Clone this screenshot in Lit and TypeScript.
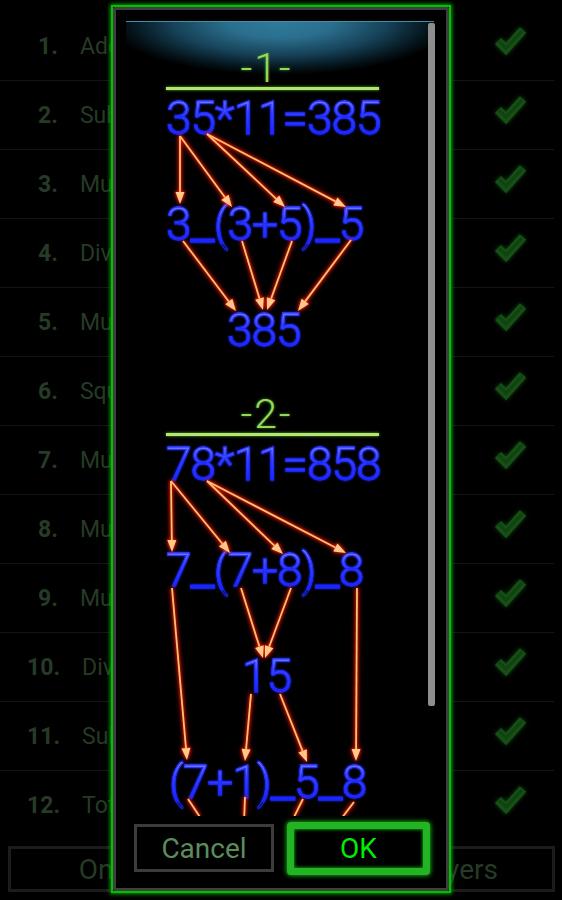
import { LitElement, html, css, svg } from "lit";
import { customElement } from "lit/decorators.js";
import { classMap } from "lit/directives/class-map.js";

const NAMES = ["Addition","Subtraction","Multiplication","Division","Multiplication","Square","Multiplication","Multiplication","Multiplication","Division","Subtraction","Total"];

type Line = { text: string; cls: string };
const SECTIONS: { title: string; lines: Line[] }[] = [
  { title: "-1-", lines: [
    { text: "35*11=385", cls: "l0" },
    { text: "3_(3+5)_5", cls: "l1" },
    { text: "385", cls: "l2" },
  ]},
  { title: "-2-", lines: [
    { text: "78*11=858", cls: "l0" },
    { text: "7_(7+8)_8", cls: "l1" },
    { text: "15", cls: "l3" },
    { text: "(7+1)_5_8", cls: "l4" },
  ]},
];

const ARROWS: number[][] = [
  [180,137,180,205],[180,137,232,208],[207,135,285,208],[207,135,346,208],
  [183,242,236,312],[242,242,263,311],[292,242,267,311],[351,241,298,312],
  [171,482,172,553],[171,482,230,554],[207,482,283,555],[207,482,346,554],
  [172,589,187,761],[241,589,263,659],[291,589,265,659],[357,589,356,762],
  [251,695,245,762],[280,695,307,763],
];
const STUBS: number[][] = [[188,800,204,824],[245,798,244,824],[303,800,291,824],[354,803,338,824]];

function arrow(a: number[]) {
  const [x1, y1, x2, y2] = a;
  const d = Math.hypot(x2 - x1, y2 - y1);
  const ux = (x2 - x1) / d, uy = (y2 - y1) / d;
  const L = 12, W = 4.5;
  const bx = x2 - ux * L, by = y2 - uy * L;
  const pts = `${x2},${y2} ${bx - uy * W},${by + ux * W} ${bx + uy * W},${by - ux * W}`;
  return svg`<line x1=${x1} y1=${y1} x2=${bx} y2=${by} class="ln"></line><polygon points=${pts} class="hd"></polygon>`;
}
function stub(a: number[]) {
  return svg`<line x1=${a[0]} y1=${a[1]} x2=${a[2]} y2=${a[3]} class="ln"></line>`;
}
function formula(text: string) {
  return text.split(/(_)/).map(p => p === "_" ? html`<span class="u">_</span>` : p);
}

@customElement("app-root")
export class AppRoot extends LitElement {
  static styles = css`
    :host { display: block; width: 562px; height: 900px; background: #000; position: relative; overflow: hidden; font-family: Roboto, "Noto Sans", sans-serif; }
    .page { display: flex; flex-direction: column; padding-top: 12px; height: 900px; box-sizing: border-box; }
    .row { height: 68px; border-bottom: 1px solid #141414; margin: 0 8px 0 0; display: flex; align-items: center; box-sizing: content-box; flex: none; }
    .row.last { border-bottom-color: transparent; }
    .num { font-size: 23px; font-weight: 700; color: #263a26; margin-left: 38px; margin-right: 22px; }
    .num.wide { margin-left: 27px; }
    .name { font-size: 23px; color: #263a26; flex: 1; }
    .check { width: 36px; height: 36px; margin: 0 26px 14px 0; filter: blur(0.7px) drop-shadow(0 0 2px #0e4a0e); }
    .modes { display: flex; margin: 6px 7px 0 8px; height: 46px; }
    .mode { flex: 1; border: 3px solid #1c1c1c; box-sizing: border-box; display: flex; align-items: center; justify-content: center; font-size: 28px; color: #263a26; }
    .mode + .mode { border-left: none; }

    .modal { position: absolute; left: 111px; top: 5px; width: 340px; height: 888px; box-sizing: border-box; background: #000; border: 2px solid #00c000; box-shadow: 0 0 4px 1px #0a9a0a; display: flex; flex-direction: column; }
    .inner { flex: 1; border: 3px solid #3f3f3f; border-radius: 2px; display: flex; flex-direction: column; min-height: 0; }
    .scroll { position: relative; height: 806px; overflow: hidden; flex: none; padding: 36px 0 0 50px; box-sizing: border-box; }
    .glow { position: absolute; left: 10px; top: 11px; width: 308px; height: 54px; background: radial-gradient(ellipse 56% 100% at 50% 0, #2f7a9c 0%, #2b6f8e 30%, #164258 62%, #061820 85%, #000 100%); border-top: 1px solid #3f8fa8; box-sizing: border-box; }
    .bar { position: absolute; left: 312px; top: 13px; width: 7px; height: 683px; background: #8e8e8e; border-radius: 2px; }
    .arrows { position: absolute; left: 0; top: 0; width: 330px; height: 806px; filter: drop-shadow(0 0 1.5px #ff1a00) drop-shadow(0 0 2px #d01400); }
    .ln { stroke: #ffc070; stroke-width: 1.8; }
    .hd { fill: #ffc98a; }
    .sec { position: relative; width: 213px; }
    .sec + .sec { margin-top: 42px; }
    .title { height: 44px; line-height: 44px; text-align: center; padding-right: 12px; margin-bottom: -3px; font-weight: 300; font-size: 41px; letter-spacing: 2px; color: #94d85a; text-shadow: 0 0 3px #4a8a20; }
    .rule { height: 3px; background: #aee870; box-shadow: 0 0 3px #6fb030; margin-bottom: 8px; }
    .f { height: 40px; line-height: 40px; white-space: nowrap; font-weight: 300; font-size: 46px; letter-spacing: -1px; width: max-content; background: linear-gradient(#8088ff 0%, #3a44ff 35%, #1420ff 100%); -webkit-background-clip: text; background-clip: text; color: transparent; -webkit-text-stroke: 0.8px #1c28ff; filter: drop-shadow(0 0 1px #1c28ff); }
    .u { font-size: 56px; line-height: 0; vertical-align: 1px; letter-spacing: -1px; }
    .l1, .l2, .l3, .l4 { margin-top: 66px; }
    .l1 { margin-top: 66px; }
    .l2 { margin-left: 61px; }
    .l3 { margin-left: 76px; }
    .l4 { margin-left: 3px; }
    .btns { display: flex; align-items: center; gap: 13px; padding: 0 0 8px 18px; flex: 1; min-height: 0; }
    .b { box-sizing: border-box; display: flex; align-items: center; justify-content: center; font-size: 28px; background: #000; }
    .cancel { width: 140px; height: 48px; border: 3px solid #3c3c3c; color: #5c8c5c; }
    .ok { width: 143px; height: 53px; border: 7px solid #22b422; border-radius: 4px; color: #00ee00; box-shadow: 0 0 4px 1px #16a016, inset 0 0 3px 1px #0a8c0a; }
  `;

  render() {
    return html`
      <div class="page">
        ${NAMES.map((n, i) => html`
          <div class=${classMap({ row: true, last: i === 11 })}>
            <span class=${classMap({ num: true, wide: i >= 9 })}>${i + 1}.</span>
            <span class="name">${n}</span>
            <svg class="check" viewBox="0 0 36 36"><path d="M6 20 L14 28 L31 9" fill="none" stroke="#174f17" stroke-width="8.5"></path><path d="M7 20 L14 27 L30 10" fill="none" stroke="#0f430f" stroke-width="3"></path></svg>
          </div>`)}
        <div class="modes"><div class="mode">One Player</div><div class="mode">Multi Players</div></div>
      </div>
      <div class="modal">
        <div class="inner">
          <div class="scroll">
            <div class="glow"></div>
            ${SECTIONS.map(s => html`
              <div class="sec">
                <div class="title">${s.title}</div>
                <div class="rule"></div>
                ${s.lines.map(l => html`<div class="f ${l.cls}">${formula(l.text)}</div>`)}
              </div>`)}
            <svg class="arrows" viewBox="116 11 330 806">${ARROWS.map(arrow)}${STUBS.map(stub)}</svg>
            <div class="bar"></div>
          </div>
          <div class="btns">
            <div class="b cancel">Cancel</div>
            <div class="b ok">OK</div>
          </div>
        </div>
      </div>
    `;
  }
}
